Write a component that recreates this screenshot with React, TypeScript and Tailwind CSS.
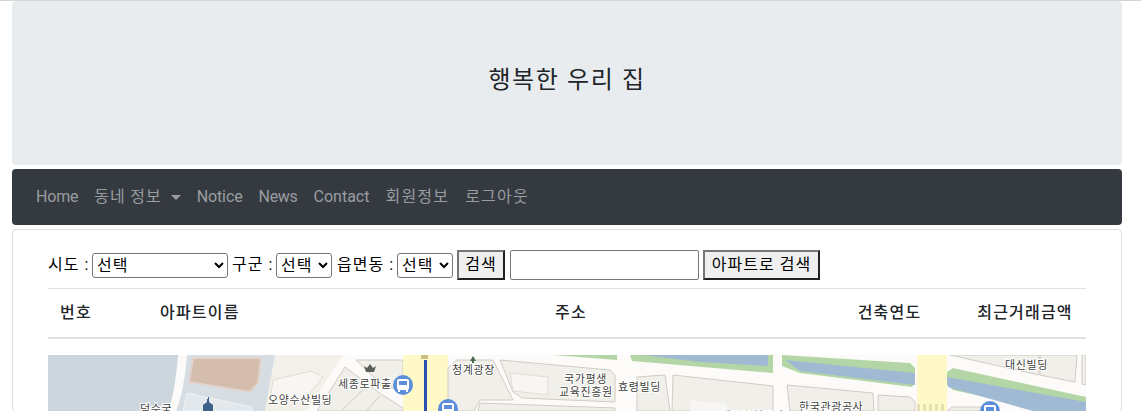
const kr = '[font-family:"Roboto","Noto_Sans_CJK_KR",sans-serif]';

function BusPin({ x, y }: { x: number; y: number }) {
  return (
    <g>
      <circle cx={x} cy={y} r="10" fill="#5b8fdc" />
      <rect x={x - 6} y={y - 6} width="12" height="11" rx="2" fill="#fff" />
      <rect x={x - 4} y={y - 4} width="8" height="4" fill="#5b8fdc" />
      <rect x={x - 5} y={y + 5} width="2" height="2" fill="#fff" />
      <rect x={x + 3} y={y + 5} width="2" height="2" fill="#fff" />
    </g>
  );
}

function MapLabel({ x, y, children }: { x: number; y: number; children: string }) {
  return (
    <text
      x={x}
      y={y}
      fontSize="11"
      letterSpacing="0.6"
      fill="#3f4240"
      stroke="#fff"
      strokeWidth="2"
      paintOrder="stroke"
      fontFamily='"Noto Sans CJK KR", sans-serif'
    >
      {children}
    </text>
  );
}

// 지도는 그림이라 svg로 그림 (좌표는 화면 기준)
function MapPicture() {
  const block = "#f1efe9";
  const inner = "#f7f6f2";
  const line = "#cfccc4";
  const green = "#b4d6a6";
  const water = "#9fbad2";
  return (
    <svg viewBox="48 355 1038 56" className="block h-[56px] w-full" role="img">
      <rect x="48" y="355" width="1038" height="56" fill="#fcfbf9" />
      {/* 덕수궁 */}
      <path d="M48 355h130q-2 28-7 47l-6 9H48z" fill="#ccd6dd" />
      <path d="M187 355h88l-8 56H176q8-20 11-56z" fill="#d6dee4" />
      <polygon points="193,358 261,358 258,383 250,392 189,382" fill="#d5bdae" stroke="#e2d2cc" strokeWidth="2" />
      <polygon points="187,393 252,407 252,411 183,411" fill="#e3e8ec" stroke="#f0f2f4" />
      <path d="M203 411v-6l4-3v-3h1v-2h1v2h0v3l4 3v6z" fill="#3f6288" />
      {/* 세종로 쪽 건물 */}
      <polygon points="275,355 343,355 307,411 265,411" fill="#f3f0e9" />
      <polygon points="273,380 311,371 323,377 306,398 270,400" fill={inner} stroke="#e0ddd6" />
      <polygon points="356,360 403,360 403,388 385,388" fill={block} stroke={line} />
      <polygon points="345,367 378,392 403,408 403,411 317,411" fill={block} stroke={line} />
      <path d="M363 390l-22 21M380 396l-14 15" stroke={line} fill="none" />
      {/* 도로 */}
      <polygon points="403,355 448,355 448,411 403,411" fill="#fef9c7" />
      <rect x="424" y="360" width="3" height="51" fill="#2b4fb3" />
      <rect x="421" y="355" width="7" height="4" fill="#c9bf83" />
      {/* 청계광장 */}
      <polygon points="448,368 457,360 493,360 513,400 480,400 474,411 448,411" fill={block} stroke={line} />
      <polygon points="500,360 610,370 615,375 615,402 522,398 513,392" fill={block} stroke={line} />
      <polygon points="510,373 548,377 548,395 513,391" fill={inner} stroke="#e0ddd6" />
      <polygon points="480,403 615,408 615,411 478,411" fill={block} stroke={line} />
      <polygon points="637,377 665,375 670,411 637,411" fill={block} stroke={line} />
      <polygon points="673,375 773,386 773,411 672,411" fill={block} stroke={line} />
      <polygon points="690,400 727,404 727,411 690,411" fill={inner} />
      <polygon points="787,385 873,393 874,411 790,411" fill={block} stroke={line} />
      <polygon points="878,395 910,397 915,402 915,411 878,411" fill={block} stroke={line} />
      {/* 청계천 */}
      <polygon points="553,355 617,355 617,360" fill={green} />
      <polygon points="630,355 773,355 773,373 632,361" fill={green} />
      <polygon points="643,355 768,355 768,366 700,362" fill={water} />
      <polygon points="782,355 910,363 915,368 915,382 912,387 800,373 782,366" fill={green} />
      <polygon points="785,360 915,373 915,385 800,371" fill={water} />
      <polygon points="917,355 947,355 947,411 917,411" fill="#fef9c7" />
      <g fill="#e6e1b5">
        <rect x="917" y="404" width="3" height="7" />
        <rect x="923" y="404" width="3" height="7" />
        <rect x="929" y="404" width="3" height="7" />
        <rect x="935" y="404" width="3" height="7" />
        <rect x="941" y="404" width="3" height="7" />
      </g>
      <polygon points="950,355 1039,355 1039,375" fill={block} stroke={line} />
      <polygon points="1040,355 1077,355 1075,382 1040,375" fill={block} stroke={line} />
      <polygon points="1082,355 1086,355 1086,385 1082,384" fill={block} stroke={line} />
      <polygon points="947,372 953,368 1086,397 1086,411 1048,411 953,390 947,385" fill={green} />
      <polygon points="947,377 1086,402 1086,411 1033,411 948,387" fill={water} />
      <polygon points="947,411 952,407 995,407 995,411" fill={block} stroke={line} />
      <path d="M470 361l3-5 3 5h-2v2h-2v-2z" fill="#47684f" />
      <path d="M366 372l-2-6 3 2 3-4 3 4 3-2-2 6z" fill="#5a5f5a" />
      <MapLabel x={338} y={388}>세종로파출</MapLabel>
      <MapLabel x={140} y={413}>덕수궁</MapLabel>
      <MapLabel x={268} y={404}>오양수산빌딩</MapLabel>
      <MapLabel x={452} y={374}>청계광장</MapLabel>
      <MapLabel x={564} y={383}>국가평생</MapLabel>
      <MapLabel x={559} y={396}>교육진흥원</MapLabel>
      <MapLabel x={618} y={391}>효령빌딩</MapLabel>
      <MapLabel x={1005} y={369}>대신빌딩</MapLabel>
      <MapLabel x={799} y={411}>한국관광공사</MapLabel>
      <MapLabel x={720} y={420}>예금보험공사</MapLabel>
      {/* 버스정류장 */}
      <BusPin x={403} y={385} />
      <BusPin x={448} y={409} />
      <BusPin x={990} y={411} />
    </svg>
  );
}

function Select({ className }: { className: string }) {
  return (
    <select className={`h-[25px] rounded-[3px] border border-[#767676] bg-white text-[16px] tracking-[1px] text-black ${className}`}>
      <option>선택</option>
    </select>
  );
}

function OutsetButton({ className, children }: { className: string; children: string }) {
  return (
    <button
      type="button"
      className={`h-[30px] border-2 border-t-[#767676] border-r-[#212121] border-b-[#212121] border-l-[#767676] bg-[#efefef] text-[16px] tracking-[1px] whitespace-nowrap text-black ${className}`}
    >
      {children}
    </button>
  );
}

export default function App() {
  return (
    <div className={`h-[411px] overflow-hidden border-t border-[#d2d5d6] bg-white pr-[19px] pl-3 text-[16px] text-[#212529] ${kr}`}>
      {/* 제목 */}
      <div className="flex h-[164px] items-center justify-center rounded bg-[#e9ecef] pb-[6px] text-[24px] tracking-[1.6px]">
        행복한 우리 집
      </div>

      {/* 메뉴 */}
      <nav className="mt-1 flex h-14 items-center gap-4 rounded bg-[#343a40] px-6 text-[#9a9da0]">
        <span className="tracking-[-0.2px]">Home</span>
        <span className="flex items-center gap-[9px] tracking-[0.9px]">
          동네 정보
          <span className="h-0 w-0 border-x-[5px] border-t-[5px] border-x-transparent border-t-[#9a9da0]" />
        </span>
        <span className="tracking-[-0.1px]">Notice</span>
        <span className="tracking-[-0.3px]">News</span>
        <span>Contact</span>
        <span className="tracking-[1.2px]">회원정보</span>
        <span className="tracking-[1.2px]">로그아웃</span>
      </nav>

      <div className="mt-1 rounded border border-[#dfdfdf] px-[35px] pt-5">
        {/* 검색 */}
        <div className="flex h-[30px] items-center tracking-[1px] text-black">
          <span className="w-[44px]">시도 :</span>
          <Select className="w-[136px]" />
          <span className="ml-1 w-[44px]">구군 :</span>
          <Select className="w-[56px]" />
          <span className="ml-[5px] w-[60px]">읍면동 :</span>
          <Select className="w-[56px]" />
          <OutsetButton className="ml-1 w-[48px]">검색</OutsetButton>
          <input className="ml-[5px] h-[30px] w-[189px] rounded-[2px] border border-[#767676]" />
          <OutsetButton className="ml-1 w-[117px]">아파트로 검색</OutsetButton>
        </div>

        <table className="mt-2 w-full table-fixed border-collapse tracking-[1.2px]">
          <colgroup>
            <col className="w-[100px]" />
            <col className="w-[179px]" />
            <col className="w-[488px]" />
            <col className="w-[149px]" />
            <col className="w-[122px]" />
          </colgroup>
          <thead>
            <tr className="border-t border-b-2 border-t-[#dee2e6] border-b-[#dee2e6]">
              <th className="p-3 text-left font-medium">번호</th>
              <th className="p-3 text-left font-medium">아파트이름</th>
              <th className="p-3 font-medium">주소</th>
              <th className="p-3 font-medium">건축연도</th>
              <th className="py-3 font-medium whitespace-nowrap">최근거래금액</th>
            </tr>
          </thead>
        </table>

        <div className="mt-4">
          <MapPicture />
        </div>
      </div>
    </div>
  );
}
